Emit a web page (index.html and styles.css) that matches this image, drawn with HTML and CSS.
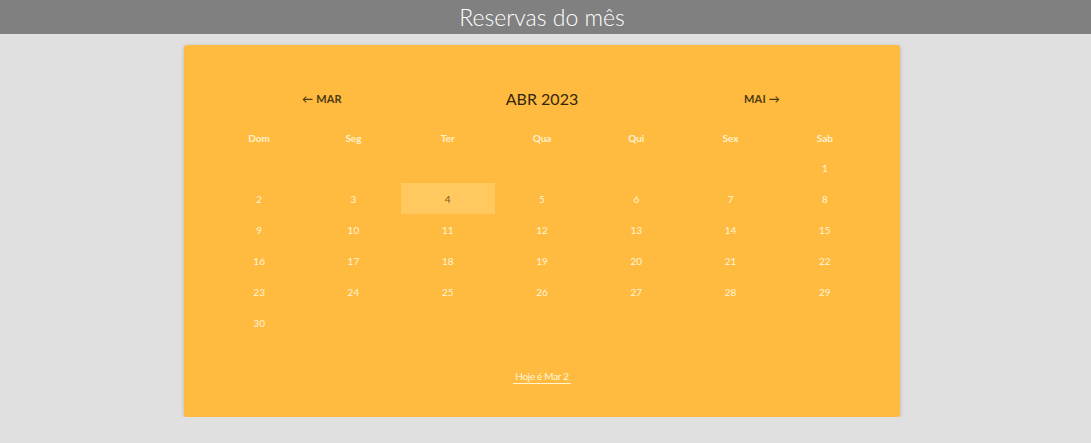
FILE: index.html
```html
<!DOCTYPE html>
<html lang="pt">
<head>
<meta charset="utf-8">
<title>Reservas do mês</title>
<link rel="stylesheet" href="styles.css">
</head>
<body>
<header class="topbar"><h1 class="title">Reservas do mês</h1></header>
<main class="page">
  <section class="card">
    <nav class="nav">
      <a class="nav-link">&larr; MAR</a>
      <span class="nav-current">ABR 2023</span>
      <a class="nav-link">MAI &rarr;</a>
    </nav>
    <div class="grid">
      <div class="wd">Dom</div><div class="wd">Seg</div><div class="wd">Ter</div><div class="wd">Qua</div><div class="wd">Qui</div><div class="wd">Sex</div><div class="wd">Sab</div>
      <div class="day"></div><div class="day"></div><div class="day"></div><div class="day"></div><div class="day"></div><div class="day"></div><div class="day">1</div>
      <div class="day">2</div><div class="day">3</div><div class="day today">4</div><div class="day">5</div><div class="day">6</div><div class="day">7</div><div class="day">8</div>
      <div class="day">9</div><div class="day">10</div><div class="day">11</div><div class="day">12</div><div class="day">13</div><div class="day">14</div><div class="day">15</div>
      <div class="day">16</div><div class="day">17</div><div class="day">18</div><div class="day">19</div><div class="day">20</div><div class="day">21</div><div class="day">22</div>
      <div class="day">23</div><div class="day">24</div><div class="day">25</div><div class="day">26</div><div class="day">27</div><div class="day">28</div><div class="day">29</div>
      <div class="day">30</div><div class="day"></div><div class="day"></div><div class="day"></div><div class="day"></div><div class="day"></div><div class="day"></div>
    </div>
    <div class="footer"><a class="today-link">Hoje é Mar 2</a></div>
  </section>
</main>
</body>
</html>
```

FILE: styles.css
```css
* { box-sizing: border-box; }
html, body {
  margin: 0;
  padding: 0;
  background: #e0e0e0;
  font-family: "Lato", "Open Sans", sans-serif;
}
.topbar {
  height: 34px;
  background: #808080;
  padding-right: 7px;
  display: flex;
  align-items: center;
  justify-content: center;
}
.title {
  margin: 0;
  font-size: 23px;
  font-weight: 300;
  color: #ffffff;
  line-height: 34px;
}
.page {
  padding: 11px 7px 0 0;
  display: flex;
  justify-content: center;
}
.card {
  width: 716px;
  height: 372px;
  background: #ffbb3f;
  border-radius: 3px;
  box-shadow: 0 1px 4px rgba(0,0,0,0.18);
  padding: 42px 28px 0 28px;
}
.nav {
  display: grid;
  grid-template-columns: repeat(3, 1fr);
  height: 22px;
  align-items: center;
  text-align: center;
}
.nav-link {
  font-size: 11px;
  font-weight: 700;
  color: #4d3a12;
  letter-spacing: 0.2px;
}
.nav-current {
  font-size: 16px;
  font-weight: 400;
  color: #33260c;
}
.grid {
  margin-top: 14px;
  width: 660px;
  display: grid;
  grid-template-columns: repeat(7, 1fr);
  grid-template-rows: 29px repeat(6, 31px);
}
.wd {
  display: flex;
  align-items: center;
  justify-content: center;
  font-size: 10px;
  font-weight: 700;
  color: #fff1d0;
}
.day {
  display: flex;
  align-items: center;
  justify-content: center;
  font-size: 10px;
  color: #fff3da;
}
.today {
  background: #ffc95f;
  color: #7a5a22;
}
.footer {
  margin-top: 26px;
  text-align: center;
}
.today-link {
  display: inline-block;
  font-size: 10px;
  color: #fff5dc;
  padding: 0 2px 1px;
  border-bottom: 1px solid #fff3d0;
  letter-spacing: -0.3px;
}
```
